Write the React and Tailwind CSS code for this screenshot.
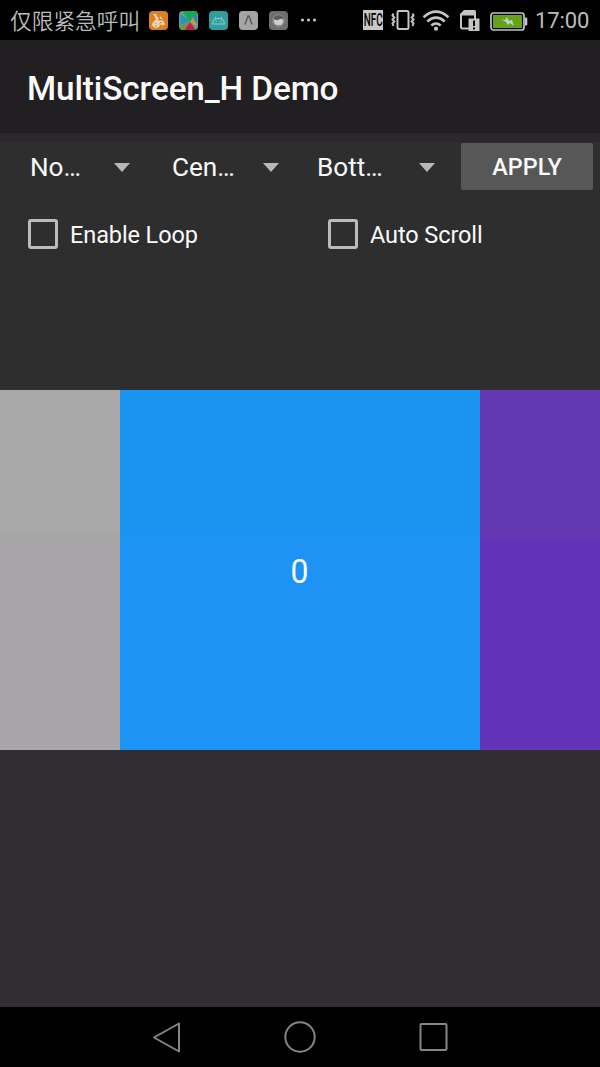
import React from "react";

function StatusBar() {
  return (
    <header className="flex h-10 shrink-0 items-center bg-black text-[#bcbcbc]">
      <span className="ml-[10px] w-[139px] shrink-0 whitespace-nowrap font-['Noto_Sans_CJK_SC',sans-serif] text-[21.7px] leading-10 font-[350]">
        仅限紧急呼叫
      </span>
      <div className="flex w-[139px] shrink-0 gap-[11px]">
        <svg className="h-[19px] w-[19px] shrink-0" viewBox="0 0 19 19">
          <rect width="19" height="19" rx="4" fill="#dc811f" />
          <path d="M4 3h3l1 3 2 1-1 2 2 2-1 1 1 3-3 2-4-1-1-3 2-3 2-1-1-3z" fill="#ead9c3" />
          <path d="M11 6l2 2M11 13h5M13.500 9.500v5M9 13l2-3 4 1" fill="none" stroke="#ead9c3" strokeWidth="1.500" />
          <path d="M6 11.500l2 2M6 15h2" stroke="#dc811f" strokeWidth="1" />
        </svg>
        <svg className="h-[19px] w-[19px] shrink-0" viewBox="0 0 19 19">
          <defs>
            <clipPath id="play-clip"><rect width="19" height="19" rx="4" /></clipPath>
          </defs>
          <g clipPath="url(#play-clip)">
            <rect width="19" height="19" fill="#6e9a94" />
            <path d="M1 3l10 7-9 7z" fill="#2595b9" />
            <path d="M3 0h15v7l-7 4z" fill="#12ac52" />
            <path d="M11 11l3-6h4v7z" fill="#2587cd" />
            <path d="M11 11l3-5 4 9z" fill="#d59a2c" />
            <path d="M11 11l6 8H5z" fill="#c9203d" />
            <path d="M10 10l-4 9H1v-5z" fill="#6b9a4f" />
          </g>
        </svg>
        <svg className="h-[19px] w-[19px] shrink-0" viewBox="0 0 19 19">
          <rect width="19" height="19" rx="4" fill="#2f9e9e" />
          <path d="M3.500 13c0-7.500 12-7.500 12 0zM6 6l1.200 2M13 6l-1.200 2" fill="none" stroke="#8ecbca" strokeWidth="1.200" />
          <path d="M6.500 10.500h1.200M11.300 10.500h1.200" stroke="#8ecbca" strokeWidth="1.300" />
        </svg>
        <svg className="h-[19px] w-[19px] shrink-0" viewBox="0 0 19 19">
          <rect width="19" height="19" rx="4" fill="#a5a5a5" />
          <path d="M6 13.500L9 5h1l3 8.500" fill="none" stroke="#5c5c5c" strokeWidth="1.500" />
        </svg>
        <svg className="h-[19px] w-[19px] shrink-0" viewBox="0 0 19 19">
          <rect width="19" height="19" rx="4" fill="#6f6f6f" />
          <circle cx="9.500" cy="9.500" r="5.800" fill="#5c5c5c" stroke="#919191" />
          <path d="M4.500 8q3 2 5.500 .5t4.500 .5q0 5.500-5 5.500t-5-6.500z" fill="#cecece" />
        </svg>
      </div>
      <svg className="ml-[11px] h-5 w-5 shrink-0" viewBox="0 0 20 20" fill="#c4c4c4">
        <circle cx="3.500" cy="10" r="1.600" />
        <circle cx="9.500" cy="10" r="1.600" />
        <circle cx="15.500" cy="10" r="1.600" />
      </svg>
      <div className="ml-[44px] flex h-5 w-5 shrink-0 items-center justify-center overflow-hidden bg-[#c9c9c9]">
        <span className="scale-x-[0.55] font-['Roboto',sans-serif] text-[18px] leading-5 font-medium text-black">
          NFC
        </span>
      </div>
      <svg className="ml-[8px] h-5 w-6 shrink-0" viewBox="0 0 24 20" fill="none" stroke="#c4c4c4" strokeWidth="2">
        <rect x="6.500" y="1" width="11" height="18" rx="1.500" />
        <path d="M2.500 3.500l-1 2 1.800 2-1.800 2 1.800 2-1.800 2 1 2.500M21.500 3.500l1 2-1.800 2 1.800 2-1.800 2 1.800 2-1 2.500" />
      </svg>
      <svg className="ml-[7px] h-[21px] w-7 shrink-0" viewBox="0 0 28 21" fill="none" stroke="#c4c4c4" strokeWidth="2.500">
        <path d="M1.500 7.200Q14-4 26.500 7.200M5.300 11.500q8.700-7.700 17.400 0M9.300 15.500q4.700-4 9.400 0" />
        <circle cx="14" cy="18.700" r="2.100" fill="#c4c4c4" stroke="none" />
      </svg>
      <svg className="ml-[10px] h-[21px] w-5 shrink-0" viewBox="0 0 20 21">
        <path d="M9 18.500H2.500Q1 18.500 1 17V4.500L4.500 1H13q2 0 2 2v6" fill="none" stroke="#c4c4c4" strokeWidth="2" />
        <path d="M0 5.500V4.500L4.500 0H14q2 0 2 2v3.500z" fill="#c4c4c4" />
        <rect x="8.500" y="8.500" width="11" height="12.500" rx="0.500" fill="#c4c4c4" />
        <path d="M14 10.500v5.500M14 17.500v2" stroke="#000" strokeWidth="2" />
      </svg>
      <svg className="mt-[2px] ml-[10px] h-[19px] w-[38px] shrink-0" viewBox="0 0 38 19">
        <rect x="1" y="1" width="33" height="17" rx="2.500" fill="#000" stroke="#c4c4c4" strokeWidth="1.700" />
        <rect x="3" y="3" width="29" height="13" fill="#67a019" />
        <path d="M35 5.500h1q1.300 0 1.300 1.300v5.400q0 1.300-1.300 1.300h-1z" fill="#c4c4c4" />
        <path d="M11 7l4 1 2-3 2 4 3-1 2 6-4-3-2 2-2-3z" fill="#b9d5c6" />
      </svg>
      <span className="ml-[7px] shrink-0 pt-[2px] font-['Roboto',sans-serif] text-[22px] leading-[38px] font-normal tracking-[-0.1px]">
        17:00
      </span>
    </header>
  );
}

function Spinner({ label, className }) {
  return (
    <button className={`flex h-[47px] shrink-0 items-center justify-between text-[26.5px] leading-[47px] ${className}`}>
      <span className="origin-left scale-x-[0.985] whitespace-nowrap">{label}</span>
      <svg className="mt-px h-[9px] w-4" viewBox="0 0 16 9">
        <path d="M0 0h16L8 9z" fill="#b9b7b9" />
      </svg>
    </button>
  );
}

function CheckOption({ label }) {
  return (
    <label className="flex flex-1 items-center pl-7">
      <span className="h-[30px] w-[30px] shrink-0 rounded-[3px] border-[3px] border-[#bcbabc]" />
      <span className="mt-[2px] ml-3 whitespace-nowrap text-[23.5px] leading-[30px] tracking-[-0.1px]">{label}</span>
    </label>
  );
}

function NavBar() {
  return (
    <nav className="flex h-[60px] shrink-0 items-center justify-center gap-[102px] bg-black">
      <svg className="h-8 w-8" viewBox="0 0 32 32" fill="none" stroke="#858585" strokeWidth="2" strokeLinejoin="round">
        <path d="M29 2.500v28L4 16.500z" />
      </svg>
      <svg className="h-8 w-8" viewBox="0 0 32 32" fill="none" stroke="#858585" strokeWidth="2">
        <circle cx="16" cy="16" r="14.700" />
      </svg>
      <svg className="h-8 w-8" viewBox="0 0 32 32" fill="none" stroke="#858585" strokeWidth="2">
        <rect x="2.500" y="3" width="26" height="26" rx="1" />
      </svg>
    </nav>
  );
}

export default function App() {
  return (
    <div className="flex h-[1067px] w-[600px] flex-col overflow-hidden bg-[#302e30] font-['Roboto',sans-serif] text-[#fafafa]">
      <StatusBar />
      <div className="flex h-[93px] shrink-0 items-center bg-[#211f21] pt-[5px] pl-[27px]">
        <h1 className="whitespace-nowrap text-[33.3px] leading-10 font-medium tracking-[-0.1px]">MultiScreen_H Demo</h1>
      </div>
      <main className="flex min-h-0 flex-1 flex-col">
        <div className="h-[257px] shrink-0 bg-[#2f2e2f]">
          <div className="flex h-[57px] items-start border-t-[9px] border-[#2a282a] pt-px">
            <Spinner label="No…" className="ml-[30px] w-[100px]" />
            <Spinner label="Cen…" className="ml-[42px] w-[107px]" />
            <Spinner label="Bott…" className="ml-[38px] w-[118px]" />
            <button className="ml-[26px] h-[47px] w-[132px] shrink-0 rounded-[2px] bg-[#585758] pt-[3px] text-[23.4px] font-medium">
              APPLY
            </button>
          </div>
          <div className="mt-[28px] flex h-[31px] items-center">
            <CheckOption label="Enable Loop" />
            <CheckOption label="Auto Scroll" />
          </div>
        </div>
        <div className="flex h-[360px] shrink-0">
          <div className="w-[120px] bg-linear-to-b from-[#a8a8a8] from-40% to-[#a7a5a7] to-40%" />
          <div className="flex w-[360px] items-center justify-center bg-linear-to-b from-[#1994f0] from-[143px] to-[#1e93f6] to-[143px] pt-[2px] text-[34px]">
            <span className="scale-x-[0.94]">0</span>
          </div>
          <div className="w-[120px] bg-linear-to-b from-[#6438b2] from-[143px] to-[#6233b6] to-[153px]" />
        </div>
      </main>
      <NavBar />
    </div>
  );
}
